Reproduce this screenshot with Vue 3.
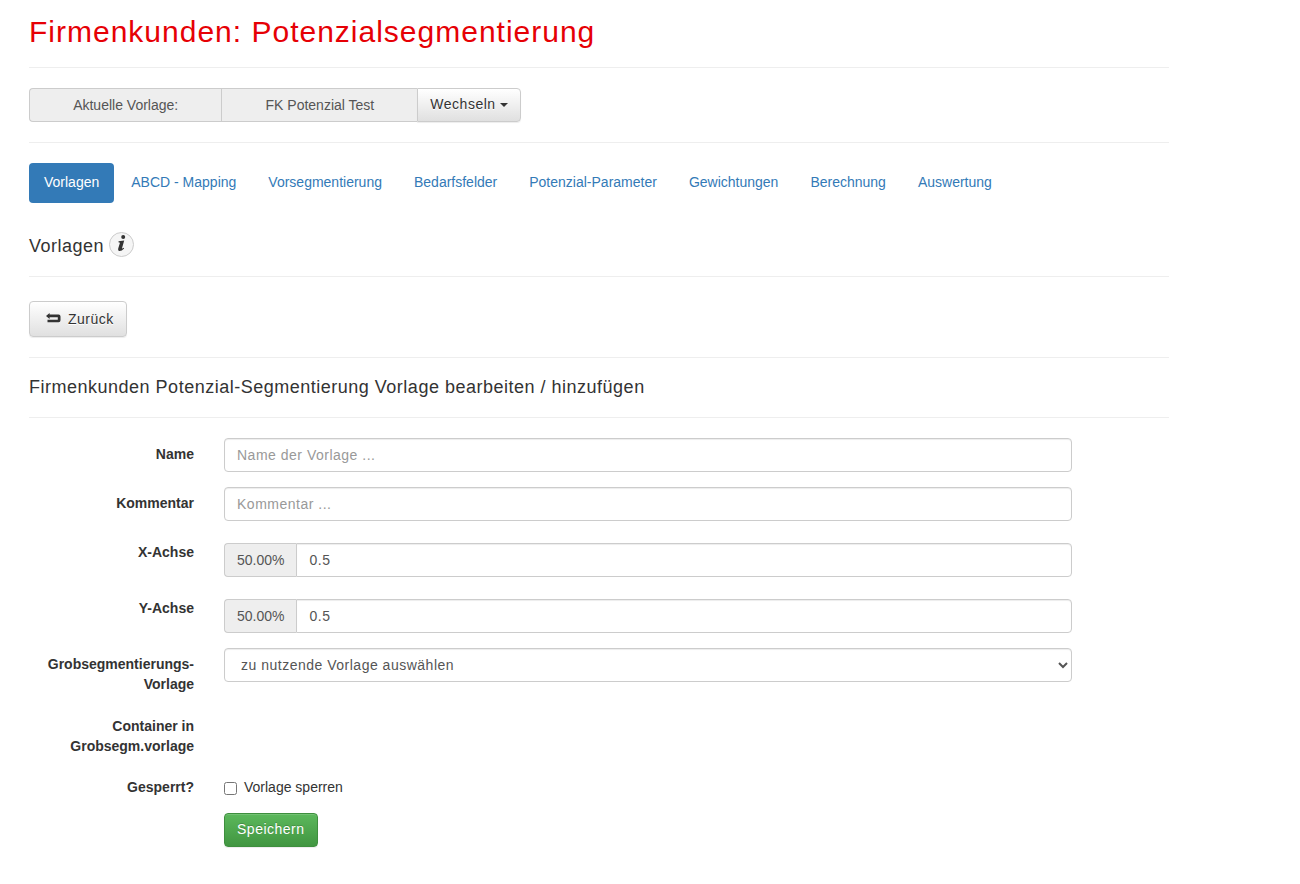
<script setup>
import { ref } from 'vue'

const tabs = [
  'Vorlagen',
  'ABCD - Mapping',
  'Vorsegmentierung',
  'Bedarfsfelder',
  'Potenzial-Parameter',
  'Gewichtungen',
  'Berechnung',
  'Auswertung'
]
const active = ref('Vorlagen')
const name = ref('')
const comment = ref('')
const xAxis = ref('0.5')
const yAxis = ref('0.5')
const template = ref('')
const locked = ref(false)
const percent = (v) => (Number(v) * 100).toFixed(2) + '%'
</script>

<template>
  <main class="page">
    <h1>Firmenkunden: Potenzialsegmentierung</h1>
    <hr />
    <div class="current">
      <span class="addon">Aktuelle Vorlage:</span>
      <span class="addon">FK Potenzial Test</span>
      <button type="button" class="btn btn-default switch">Wechseln <span class="caret"></span></button>
    </div>
    <hr />
    <nav class="tabs">
      <a v-for="t in tabs" :key="t" href="#" :class="{ active: t === active }" @click.prevent="active = t">{{ t }}</a>
    </nav>
    <div class="section-head">
      <h4>Vorlagen</h4>
      <button type="button" class="info" aria-label="Information">
        <svg width="23" height="23" viewBox="0 0 23 23" fill="#333" aria-hidden="true">
          <circle cx="13.2" cy="4" r="2" />
          <path d="M8.6 8.3 L14.2 7.6 L12 15.2 Q11.9 16.2 13.8 14.8 L14.1 15.4 Q11.6 18.2 9.2 18 Q7.6 17.7 8.2 15.6 L9.9 10 Q10 9.2 8.4 9.2 Z" />
        </svg>
      </button>
    </div>
    <hr />
    <button type="button" class="btn btn-default back">
      <svg width="15" height="12" viewBox="0 0 15 12" aria-hidden="true">
        <path d="M0 3 L3.6 0 V1.6 H12.6 Q14.5 1.6 14.5 3.5 V7.3 Q14.5 9.2 12.6 9.2 H1.5 V6.8 H11.8 V4.3 H3.6 V6 Z" fill="#333" />
      </svg>
      Zurück
    </button>
    <hr />
    <h4>Firmenkunden Potenzial-Segmentierung Vorlage bearbeiten / hinzufügen</h4>
    <hr />
    <form @submit.prevent>
      <div class="row">
        <label class="label" for="name">Name</label>
        <div class="field"><input id="name" v-model="name" class="control" type="text" placeholder="Name der Vorlage ..." /></div>
      </div>
      <div class="row">
        <label class="label" for="comment">Kommentar</label>
        <div class="field"><input id="comment" v-model="comment" class="control" type="text" placeholder="Kommentar ..." /></div>
      </div>
      <div class="row">
        <label class="label" for="x-axis">X-Achse</label>
        <div class="field axis">
          <span class="addon">{{ percent(xAxis) }}</span>
          <input id="x-axis" v-model="xAxis" class="control" type="text" />
        </div>
      </div>
      <div class="row">
        <label class="label" for="y-axis">Y-Achse</label>
        <div class="field axis">
          <span class="addon">{{ percent(yAxis) }}</span>
          <input id="y-axis" v-model="yAxis" class="control" type="text" />
        </div>
      </div>
      <div class="row">
        <label class="label" for="template">Grobsegmentierungs-Vorlage</label>
        <div class="field">
          <select id="template" v-model="template" class="control">
            <option value="">zu nutzende Vorlage auswählen</option>
          </select>
        </div>
      </div>
      <div class="row">
        <span class="label">Container in Grobsegm.vorlage</span>
        <div class="field"></div>
      </div>
      <div class="row">
        <span class="label">Gesperrt?</span>
        <div class="field">
          <label class="check"><input v-model="locked" type="checkbox" />Vorlage sperren</label>
        </div>
      </div>
      <div class="row">
        <div></div>
        <div class="field"><button type="submit" class="btn btn-success">Speichern</button></div>
      </div>
    </form>
  </main>
</template>

<style>
body {
  margin: 0;
  background: #fff;
}
</style>

<style scoped>
* {
  box-sizing: border-box;
}
.page {
  max-width: 1170px;
  margin-left: 14px;
  padding: 15px 15px 32px;
  font-family: "Liberation Sans", Arial, sans-serif;
  font-size: 14px;
  line-height: 20px;
  color: #333;
}
h1,
h4 {
  margin: 0;
  font-weight: 400;
}
h1 {
  font-size: 30px;
  line-height: 33px;
  letter-spacing: 1px;
  color: #e60005;
}
h4 {
  font-size: 18px;
  line-height: 19px;
  letter-spacing: 0.028em;
}
hr {
  margin: 20px 0;
  border: 0;
  border-top: 1px solid #eee;
}
h1 + hr {
  margin-top: 19px;
}
.current {
  display: flex;
  width: 492px;
  max-width: 100%;
}
.addon {
  padding: 6px 12px;
  border: 1px solid #ccc;
  border-right: 0;
  background: #eee;
  color: #555;
  text-align: center;
  white-space: nowrap;
}
.addon:first-child {
  border-radius: 4px 0 0 4px;
}
.current .addon {
  flex: 1 1 auto;
}
.btn {
  height: 34px;
  padding: 0 12px 2px;
  border: 1px solid #ccc;
  border-radius: 4px;
  font: inherit;
  letter-spacing: 0.036em;
  white-space: nowrap;
  cursor: pointer;
}
.btn-default {
  color: #333;
  background: linear-gradient(#fff, #e0e0e0);
  text-shadow: 0 1px 0 #fff;
  box-shadow: inset 0 1px 0 rgba(255, 255, 255, 0.15), 0 1px 1px rgba(0, 0, 0, 0.075);
}
.btn-success {
  color: #fff;
  border-color: #3e8f3e;
  background: linear-gradient(#5cb85c, #419641);
  text-shadow: 0 -1px 0 rgba(0, 0, 0, 0.2);
  box-shadow: inset 0 1px 0 rgba(255, 255, 255, 0.15), 0 1px 1px rgba(0, 0, 0, 0.075);
}
.switch {
  border-radius: 0 4px 4px 0;
}
.caret {
  display: inline-block;
  vertical-align: middle;
  border-top: 4px solid #333;
  border-left: 4px solid transparent;
  border-right: 4px solid transparent;
}
.tabs {
  display: flex;
  flex-wrap: wrap;
  gap: 2px;
}
.tabs a {
  padding: 9px 15px 11px;
  border-radius: 4px;
  color: #337ab7;
  text-decoration: none;
}
.tabs .active {
  color: #fff;
  background: #337ab7;
}
.section-head {
  display: flex;
  align-items: center;
  gap: 5px;
  margin-top: 29px;
}
.section-head h4 {
  padding-top: 3px;
}
.section-head + hr {
  margin: 19px 0 24px;
}
.info {
  display: grid;
  place-items: center;
  width: 25px;
  height: 25px;
  padding: 0;
  border: 1px solid #ccc;
  border-radius: 50%;
  background: #f5f5f5;
}
.back {
  display: flex;
  align-items: center;
  gap: 7px;
  height: 36px;
  padding: 0 12px 0 16px;
}
form {
  display: grid;
  gap: 15px;
}
.row {
  display: grid;
  grid-template-columns: 2fr 9fr 1fr;
  margin: 0 -15px;
}
.label {
  padding: 6px 15px 0;
  font-weight: 700;
  text-align: right;
}
label.label {
  padding-bottom: 1px;
}
.field {
  min-width: 0;
  padding: 0 15px;
}
.control {
  display: block;
  width: 100%;
  height: 34px;
  padding: 6px 12px;
  border: 1px solid #ccc;
  border-radius: 4px;
  background: #fff;
  box-shadow: inset 0 1px 1px rgba(0, 0, 0, 0.075);
  color: #555;
  font: inherit;
  letter-spacing: 0.036em;
}
.control::placeholder {
  color: #999;
}
.axis {
  display: flex;
  padding-top: 7px;
}
.axis .control {
  flex: 1;
  min-width: 0;
  border-radius: 0 4px 4px 0;
}
.check {
  display: flex;
  align-items: center;
  gap: 7px;
  padding: 6px 0 1px;
}
.check input {
  width: 13px;
  height: 13px;
  margin: 3px 0 0;
}
</style>
